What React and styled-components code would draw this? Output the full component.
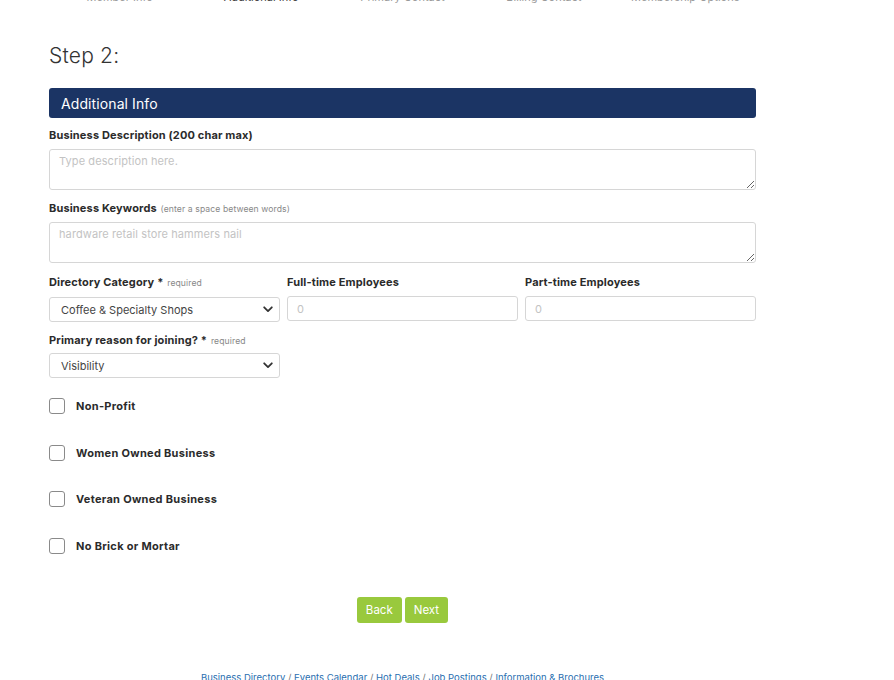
import React from "react";
import styled, { createGlobalStyle } from "styled-components";

const Global = createGlobalStyle`
  html, body { margin: 0; padding: 0; background: #fff; }
  body { font-family: Inter, "Noto Sans", Arial, sans-serif; color: #333; overflow: hidden; }
  * { box-sizing: border-box; }
`;

const Page = styled.div`
  width: 894px;
  height: 680px;
  overflow: hidden;
`;

const Container = styled.div`
  width: 707px;
  margin-left: 49px;
  display: flex;
  flex-direction: column;
`;

const Steps = styled.div`
  display: grid;
  grid-template-columns: repeat(5, 1fr);
  margin-top: -8px;
  height: 11px;
`;

const StepItem = styled.div`
  text-align: center;
  font-size: 11px;
  line-height: 11px;
  color: ${(p) => (p.$active ? "#444" : "#9a9a9a")};
`;

const Title = styled.h1`
  margin: 40px 0 0;
  font-size: 21px;
  line-height: 26px;
  font-weight: 300;
  color: #333;
  letter-spacing: 0.2px;
`;

const Banner = styled.div`
  margin-top: 19px;
  height: 30px;
  background: #1b3464;
  border-radius: 3px;
  color: #fff;
  font-size: 14px;
  display: flex;
  align-items: center;
  padding-left: 12px;
  letter-spacing: 0.1px;
`;

const Field = styled.div`
  display: flex;
  flex-direction: column;
  margin-top: ${(p) => p.$mt || 0}px;
`;

const Label = styled.label`
  font-size: 11px;
  font-weight: 700;
  color: #2b2b2b;
  line-height: 14px;
  margin-bottom: ${(p) => p.$mb || 6}px;
  letter-spacing: 0.15px;
`;

const Note = styled.span`
  font-size: 8.6px;
  font-weight: 400;
  color: #888;
  margin-left: 1px;
  letter-spacing: 0.1px;
`;

const TextArea = styled.textarea`
  height: 41px;
  width: 100%;
  border: 1px solid #d6d6d6;
  border-radius: 3px;
  padding: 4px 9px;
  font-family: inherit;
  font-size: 11px;
  color: #444;
  letter-spacing: 0.1px;
  &::placeholder { color: #c3c3c3; }
  resize: vertical;
`;

const Row = styled.div`
  display: grid;
  grid-template-columns: repeat(3, 1fr);
  column-gap: 7px;
  margin-top: 12px;
`;

const Input = styled.input`
  height: 25px;
  width: 100%;
  border: 1px solid #d6d6d6;
  border-radius: 3px;
  padding: 0 9px;
  font-family: inherit;
  font-size: 11px;
  &::placeholder { color: #c3c3c3; }
`;

const SelectWrap = styled.div`
  position: relative;
  width: 231px;
  height: 25px;
`;

const Select = styled.select`
  appearance: none;
  width: 100%;
  height: 25px;
  border: 1px solid #d6d6d6;
  border-radius: 3px;
  padding: 0 11px;
  font-family: inherit;
  font-size: 11px;
  color: #444;
  background: #fff;
`;

const Chevron = styled.svg`
  position: absolute;
  right: 7px;
  top: 9px;
  pointer-events: none;
`;

const Checks = styled.div`
  display: flex;
  flex-direction: column;
  gap: 30px;
  margin-top: 20px;
`;

const CheckRow = styled.label`
  display: flex;
  align-items: center;
  gap: 11px;
  font-size: 11px;
  font-weight: 700;
  color: #2b2b2b;
  height: 16.5px;
  letter-spacing: 0.3px;
`;

const Box = styled.span`
  width: 16px;
  height: 16px;
  border: 1px solid #8a8a8a;
  border-radius: 3px;
  background: #fff;
`;

const Buttons = styled.div`
  display: flex;
  justify-content: center;
  gap: 3px;
  margin-top: 43px;
`;

const Button = styled.button`
  height: 26px;
  padding: 0 9px;
  background: #99c93d;
  border: none;
  border-radius: 3px;
  color: #fff;
  font-family: inherit;
  font-size: 11.5px;
`;

const Footer = styled.div`
  margin-top: 49px;
  text-align: center;
  font-size: 9.5px;
  color: #777;
  a { color: #2a6fb0; text-decoration: none; }
`;

const Chev = () => (
  <Chevron width="10" height="7" viewBox="0 0 10 7">
    <path d="M1.2 1.3 L5 5.1 L8.8 1.3" fill="none" stroke="#333" strokeWidth="1.8" strokeLinecap="round" strokeLinejoin="round" />
  </Chevron>
);

export default function App() {
  const steps = ["Member Info", "Additional Info", "Primary Contact", "Billing Contact", "Membership Options"];
  const checks = ["Non-Profit", "Women Owned Business", "Veteran Owned Business", "No Brick or Mortar"];
  return (
    <Page>
      <Global />
      <Container>
        <Steps>
          {steps.map((s, i) => (
            <StepItem key={s} $active={i === 1}>{s}</StepItem>
          ))}
        </Steps>
        <Title>Step 2:</Title>
        <Banner>Additional Info</Banner>
        <Field $mt={10}>
          <Label $mb={7}>Business Description (200 char max)</Label>
          <TextArea placeholder="Type description here." />
        </Field>
        <Field $mt={11}>
          <Label>Business Keywords <Note>(enter a space between words)</Note></Label>
          <TextArea placeholder="hardware retail store hammers nail" />
        </Field>
        <Row>
          <Field>
            <Label $mb={7}>Directory Category * <Note>required</Note></Label>
            <SelectWrap>
              <Select defaultValue="c">
                <option value="c">Coffee &amp; Specialty Shops</option>
              </Select>
              <Chev />
            </SelectWrap>
          </Field>
          <Field>
            <Label $mb={7}>Full-time Employees</Label>
            <Input placeholder="0" />
          </Field>
          <Field>
            <Label $mb={7}>Part-time Employees</Label>
            <Input placeholder="0" />
          </Field>
        </Row>
        <Field $mt={11}>
          <Label $mb={5}>Primary reason for joining? * <Note>required</Note></Label>
          <SelectWrap>
            <Select defaultValue="v">
              <option value="v">Visibility</option>
            </Select>
            <Chev />
          </SelectWrap>
        </Field>
        <Checks>
          {checks.map((c) => (
            <CheckRow key={c}>
              <Box />
              {c}
            </CheckRow>
          ))}
        </Checks>
        <Buttons>
          <Button>Back</Button>
          <Button>Next</Button>
        </Buttons>
        <Footer>
          <a>Business Directory</a> / <a>Events Calendar</a> / <a>Hot Deals</a> / <a>Job Postings</a> / <a>Information &amp; Brochures</a>
        </Footer>
      </Container>
    </Page>
  );
}
